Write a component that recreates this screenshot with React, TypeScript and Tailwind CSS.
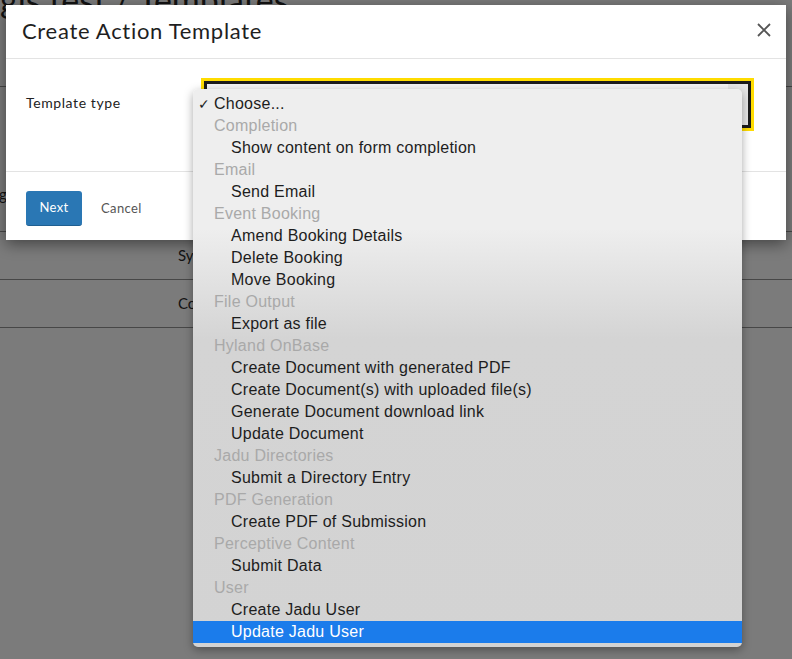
import React from 'react';

// Option groups shown in the native select popup
const groups = [
  { label: 'Completion', items: ['Show content on form completion'] },
  { label: 'Email', items: ['Send Email'] },
  { label: 'Event Booking', items: ['Amend Booking Details', 'Delete Booking', 'Move Booking'] },
  { label: 'File Output', items: ['Export as file'] },
  {
    label: 'Hyland OnBase',
    items: [
      'Create Document with generated PDF',
      'Create Document(s) with uploaded file(s)',
      'Generate Document download link',
      'Update Document',
    ],
  },
  { label: 'Jadu Directories', items: ['Submit a Directory Entry'] },
  { label: 'PDF Generation', items: ['Create PDF of Submission'] },
  { label: 'Perceptive Content', items: ['Submit Data'] },
  { label: 'User', items: ['Create Jadu User', 'Update Jadu User'] },
];

const selected = 'Update Jadu User';

export default function App() {
  return (
    <div className="relative w-[792px] h-[659px] overflow-hidden bg-[#7b7b7b] font-['Lato',sans-serif]">
      {/* page behind the overlay */}
      <div className="flex flex-col">
        <div className="h-[87px] border-b border-[#474747]">
          <div className="-mt-[20px] text-[34px] leading-[40px] text-[#131313]">gis test / Templates</div>
        </div>
        <div className="h-[145px] border-b border-[#474747] flex items-center pt-[70px]">
          <span className="text-[15px] text-[#131313] -ml-[1px]">g</span>
        </div>
        <div className="h-[48px] border-b border-[#474747] flex items-center pl-[178px] text-[15px] text-[#131313]">Sy</div>
        <div className="h-[48px] border-b border-[#474747] flex items-center pl-[178px] text-[15px] text-[#131313]">Co</div>
      </div>

      {/* modal */}
      <div className="absolute left-[6px] top-[5px] w-[780px] h-[235px] bg-white shadow-[0_4px_14px_rgba(0,0,0,0.45)] flex flex-col">
        <div className="h-[54px] border-b border-[#e3e3e3] flex items-center justify-between pl-[16px] pr-[15px]">
          <h1 className="text-[22px] text-[#1f1f1f] tracking-[0.7px] -mt-[2px]">Create Action Template</h1>
          <svg width="14" height="14" viewBox="0 0 14 14" className="-mt-[3px]">
            <path d="M1 1L13 13M13 1L1 13" stroke="#555" strokeWidth="1.8" />
          </svg>
        </div>
        <div className="h-[113px] border-b border-[#e3e3e3] flex items-start pt-[19px] pl-[20px]">
          <label className="w-[175px] pt-[14px] text-[14px] text-[#222] tracking-[0.6px]">Template type</label>
          <div className="w-[553px] h-[53px] border-[3px] border-[#ffdc00] bg-[#ffdc00]">
            <div className="w-full h-full border-[3px] border-[#1c1c1c] bg-[#f4f4f4] flex justify-end">
              <div className="w-[20px] h-full bg-[#e6e6e6] flex items-center justify-center text-[10px] text-[#222]">⌄</div>
            </div>
          </div>
        </div>
        <div className="flex items-center gap-[19px] pl-[20px] pt-[19px]">
          <button className="w-[56px] h-[35px] rounded-[3px] bg-[#2a77b4] text-white text-[13px] tracking-[0.4px] border-b border-[#1f5f91]">Next</button>
          <button className="text-[13px] text-[#555] tracking-[0.4px]">Cancel</button>
        </div>
      </div>

      {/* open select menu */}
      <div className="absolute left-[193px] top-[89px] w-[549px] rounded-[5px] py-[4px] shadow-[0_3px_10px_rgba(0,0,0,0.35)] bg-[linear-gradient(to_bottom,#eeeeee_0px,#eeeeee_140px,#d4d4d4_250px,#d3d3d3_100%)] font-['Liberation_Sans',Arial,sans-serif] text-[16px] leading-[22px] tracking-[0.25px]">
        <div className="h-[22px] flex items-center text-[#1d1d1d]">
          <span className="w-[21px] text-right pr-[4px] text-[14px]">✓</span>
          <span>Choose...</span>
        </div>
        {groups.map(g => (
          <div key={g.label}>
            <div className="h-[22px] pl-[21px] text-[#a9a9a9]">{g.label}</div>
            {g.items.map(item => (
              <div
                key={item}
                className={
                  item === selected
                    ? 'h-[22px] pl-[38px] bg-[#1b7ceb] text-white'
                    : 'h-[22px] pl-[38px] text-[#1d1d1d]'
                }
              >
                {item}
              </div>
            ))}
          </div>
        ))}
      </div>
    </div>
  );
}
